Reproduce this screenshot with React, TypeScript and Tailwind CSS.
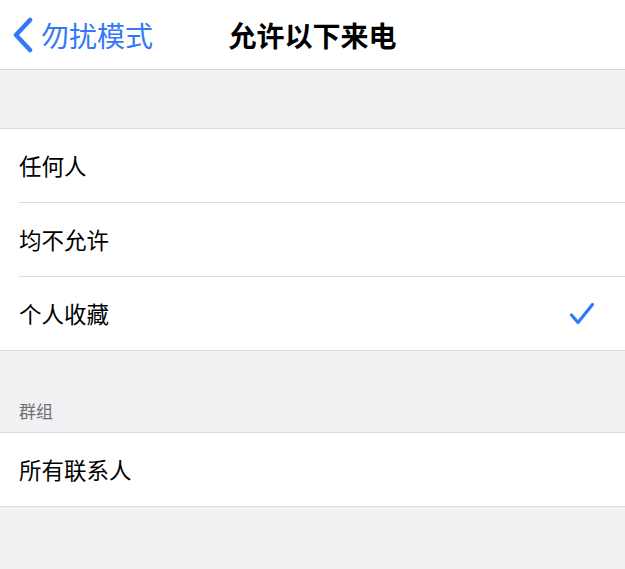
const FONT = { fontFamily: '"PingFang SC", "Noto Sans CJK SC", "Noto Sans", sans-serif' };

function Check() {
  return (
    <svg width="26" height="24" viewBox="0 0 26 24" fill="none">
      <path d="M2.5 13 L9 20.5 L23.5 2.5" stroke="#3478f6" strokeWidth="3.2" strokeLinecap="round" strokeLinejoin="round" />
    </svg>
  );
}

function Row({ label, checked, last }: { label: string; checked?: boolean; last?: boolean }) {
  return (
    <div className="pl-[19px] bg-white">
      <div
        className={
          "flex items-center justify-between pr-[30px] " +
          (last ? "h-[73px]" : "h-[74px] border-b border-[#dcdce0]")
        }
      >
        <span className="text-[22.5px] text-black leading-none">{label}</span>
        {checked && <Check />}
      </div>
    </div>
  );
}

export default function App() {
  return (
    <div className="w-[625px] h-[569px] bg-[#f1f1f4] overflow-hidden" style={FONT}>
      {/* 내비게이션 바 */}
      <div className="relative h-[70px] bg-white border-b border-[#d6d6da] flex items-center">
        <div className="flex items-center pl-[12px] text-[#3478f6]">
          <svg width="22" height="36" viewBox="0 0 22 36" fill="none">
            <path d="M18 3 L4 18 L18 33" stroke="#3478f6" strokeWidth="4.5" strokeLinecap="round" strokeLinejoin="round" />
          </svg>
          <span className="ml-[7px] text-[28px] leading-none">勿扰模式</span>
        </div>
        <div className="absolute inset-0 flex items-center justify-center pointer-events-none">
          <span className="text-[28px] font-semibold text-black leading-none">允许以下来电</span>
        </div>
      </div>

      <div className="h-[58px]" />

      <div className="border-y border-[#dcdce0]">
        <Row label="任何人" />
        <Row label="均不允许" />
        <Row label="个人收藏" checked last />
      </div>

      <div className="h-[81px] flex items-end pl-[19px] pb-[13px]">
        <span className="text-[17px] text-[#6d6d72] leading-none">群组</span>
      </div>

      <div className="border-y border-[#dcdce0]">
        <Row label="所有联系人" last />
      </div>
    </div>
  );
}
